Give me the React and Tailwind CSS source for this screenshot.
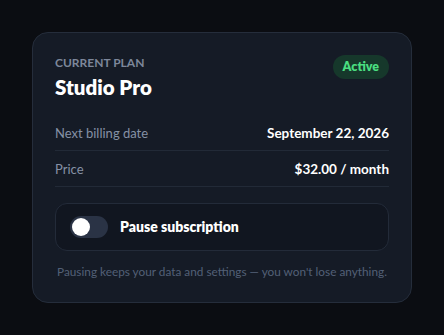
import { useState } from 'react';

const Row = ({ label, value }) => (
  <div className="flex items-center justify-between border-b border-[#222a37] pt-2 pb-[7px]">
    <span className="text-[13px] leading-5 text-[#8591a5]">{label}</span>
    <span className="text-[13.5px] leading-5 font-bold text-white">{value}</span>
  </div>
);

export default function App() {
  const [paused, setPaused] = useState(false);

  return (
    <div
      className="min-h-screen bg-[#0b0d12] flex items-center justify-center"
      style={{ fontFamily: 'Lato, "Noto Sans", sans-serif' }}
    >
      <div className="w-[380px] rounded-2xl border border-[#252d3b] bg-[#151b26] p-[22px]">
        {/* header */}
        <div className="flex items-start justify-between">
          <div>
            <div className="text-xs leading-4 font-bold uppercase text-[#7d879a]">
              Current plan
            </div>
            <div className="mt-0.5 text-[20.5px] leading-7 font-extrabold text-white">Studio Pro</div>
          </div>
          <span className="rounded-full bg-[#16382b] px-2.5 py-1 text-[12.5px] leading-4 font-extrabold text-[#4ade80]">
            Active
          </span>
        </div>

        {/* details */}
        <div className="mt-3.5">
          <Row label="Next billing date" value="September 22, 2026" />
          <Row label="Price" value="$32.00 / month" />
        </div>

        {/* pause toggle */}
        <div className="mt-4 flex items-center gap-3 rounded-xl border border-[#232b39] bg-[#111620] px-3.5 py-3">
          <button
            onClick={() => setPaused(!paused)}
            className={`relative h-[22px] w-[38px] rounded-full transition-colors ${paused ? 'bg-[#22c55e]' : 'bg-[#2a3345]'}`}
            aria-label="Pause subscription"
          >
            <span
              className={`absolute top-[2px] h-[18px] w-[18px] rounded-full bg-white transition-all ${paused ? 'left-[18px]' : 'left-[2px]'}`}
            />
          </button>
          <span className="text-sm leading-5 font-extrabold text-white">Pause subscription</span>
        </div>

        <p className="mt-[13px] whitespace-nowrap text-center text-[11.8px] leading-4 text-[#536077]">
          Pausing keeps your data and settings — you won't lose anything.
        </p>
      </div>
    </div>
  );
}
